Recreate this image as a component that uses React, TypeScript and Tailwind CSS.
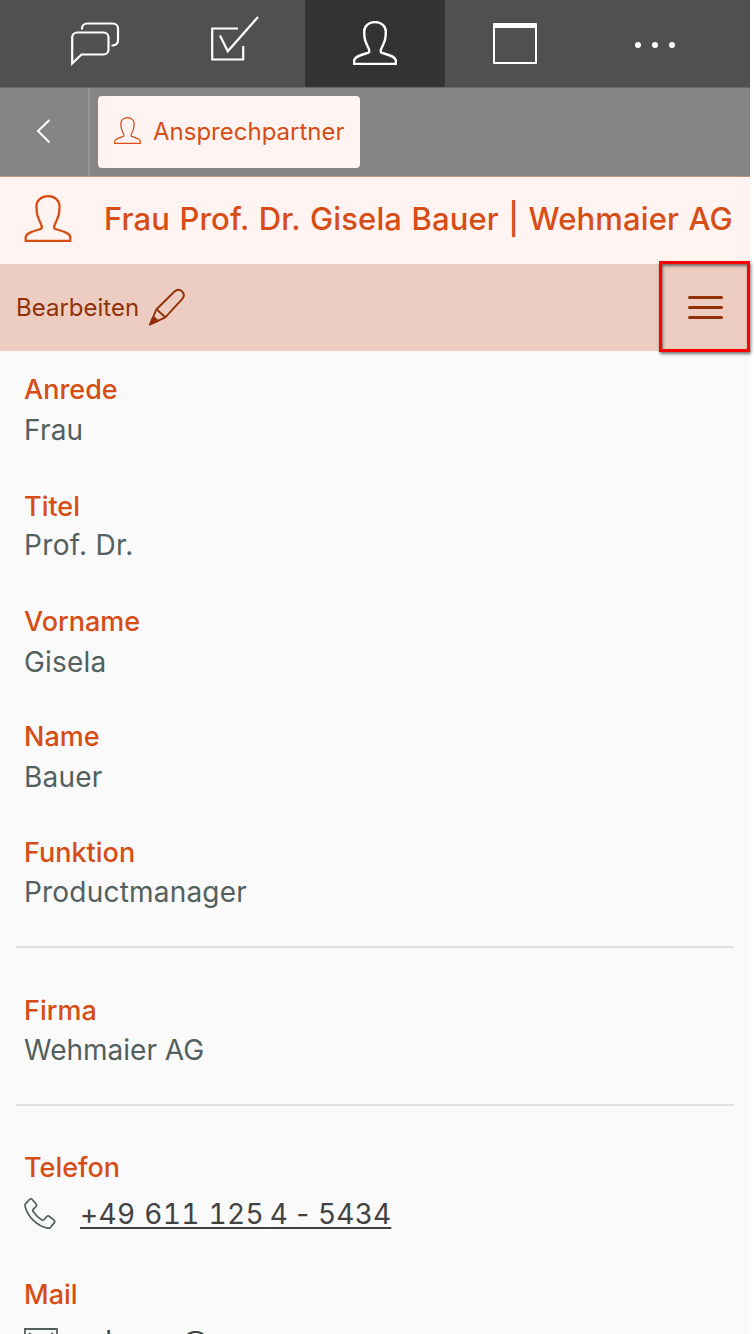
import React from "react";

function PersonIcon({ className, stroke }: { className: string; stroke: number }) {
  return (
    <svg viewBox="0 0 48 48" className={className} fill="none" stroke="currentColor" strokeWidth={stroke}>
      <path d="M24 1.2c-7 0-11.8 4.5-11.8 10.2 0 2 .4 3.200.2 4.800.2 5.800 2.200 8.600 4 12.300 1.600 3 1.500 5 .8 6C11.500 36.500 1.200 38.200 1.200 43.300v3.500h45.600v-3.500c0-5.100-10.300-6.800-16-8.800-.7-1-.8-3 .8-6 1.800-3.700 3.800-6.500 4-12.300-.2-1.600.2-2.800.2-4.800C35.800 5.700 31 1.200 24 1.200Z" />
    </svg>
  );
}

function ChatIcon() {
  return (
    <svg viewBox="0 0 50 46" className="h-[46px] w-[50px]" fill="none" stroke="currentColor" strokeWidth="2.200">
      <path d="M2.200 41.500V15.500a5 5 0 0 1 5-5h26.300a5 5 0 0 1 5 5V27.500a5 5 0 0 1-5 5H11.500L2.200 41.500Z" />
      <path d="M12 7.500V6.500a5 5 0 0 1 5-5h26a5 5 0 0 1 5 5v12a5 5 0 0 1-5 5h-1.500" />
    </svg>
  );
}

function CheckIcon() {
  return (
    <svg viewBox="0 0 50 46" className="h-[46px] w-[50px]" fill="none" stroke="currentColor" strokeWidth="2.200">
      <path d="M28 12.500H2.200v31h31V30" />
      <path d="M10 19.500l7.800 15.800L48 1" />
    </svg>
  );
}

function PencilIcon() {
  return (
    <svg viewBox="0 0 38 38" className="h-[38px] w-[38px]" fill="none" stroke="currentColor" strokeWidth="1.900" strokeLinejoin="round">
      <path d="M2 36.500l6.500-15.300L26.500 3.500c2.500-2.300 5.500-2.100 7.600 0s2.300 5.100 0 7.600L17.300 29.300 2 36.500Z" />
      <path d="M8.500 21.200l8.800 8.100" />
      <path d="M2 36.500l3.500-7.500 4.500 4Z" fill="currentColor" />
    </svg>
  );
}

function PhoneIcon() {
  return (
    <svg viewBox="0 0 34 34" className="h-[33px] w-[32px]" fill="none" stroke="currentColor" strokeWidth="1.800" strokeLinejoin="round">
      <path d="M1.800 6.500L6 1.900c.9-.8 2-.7 2.700.2l4.200 4.800c.7.9.6 1.700 0 2.600L9.800 12.600c-.7 1-.5 1.700.1 2.600 2 3 5.500 6.600 9.200 8.600.9.400 1.700.3 2.400-.4l2.700-3.200c.8-.8 1.600-.9 2.500-.3l5.200 4.200c.9.800 1 1.700.3 2.600l-4 5c-.9 1-2 1.100-3.300.8C14 30.500 4 20.500 1.200 9.500c-.3-1.200-.1-2.200.6-3Z" />
    </svg>
  );
}

const fields = [
  { label: "Anrede", value: "Frau", box: "h-[117px]", valueBox: "mt-0" },
  { label: "Titel", value: "Prof. Dr.", box: "h-[115px]", valueBox: "-mt-0.5 tracking-[0.35px]" },
  { label: "Vorname", value: "Gisela", box: "h-[115px]", valueBox: "mt-0" },
  { label: "Name", value: "Bauer", box: "h-[116px]", valueBox: "mt-0" },
  { label: "Funktion", value: "Productmanager", box: "h-[94px]", valueBox: "-mt-px" },
];

function Label({ children }: { children: React.ReactNode }) {
  return <div className="text-[27px] font-medium leading-[40px] text-[#d64d15]">{children}</div>;
}

function Value({ children }: { children: React.ReactNode }) {
  return <div className="text-[28px] leading-[40px] text-[#53605d]">{children}</div>;
}

export default function App() {
  return (
    <div className="h-[1334px] w-full overflow-hidden bg-white font-['Inter',sans-serif]">
      <div className="flex h-full w-[750px] flex-col bg-[#fafafa]">
        <nav className="flex h-[88px] shrink-0 border-b border-[#686868] bg-[#505050] text-white">
          <div className="flex w-[165px] pl-[70px] pt-[22px]"><ChatIcon /></div>
          <div className="flex w-[140px] pl-[45px] pt-4"><CheckIcon /></div>
          <div className="flex w-[140px] justify-center rounded-b-xs bg-[#333333] pt-[21px]">
            <PersonIcon className="h-[44px] w-[44px]" stroke={2.6} />
          </div>
          <div className="flex w-[140px] justify-center pt-[23px]">
            <div className="h-[41px] w-[44px] rounded-[1px] border-2 border-t-[5px] border-white" />
          </div>
          <div className="flex flex-1 items-start gap-[11px] pl-[50px] pt-[42px]">
            <span className="size-1.5 rounded-full bg-white" />
            <span className="size-1.5 rounded-full bg-white" />
            <span className="size-1.5 rounded-full bg-white" />
          </div>
        </nav>

        <div className="flex h-[89px] shrink-0 border-b border-[#c5917e] bg-[#858585]">
          <div className="flex w-[90px] border-r-2 border-[#949494] pl-[36px] pt-[30px] text-white">
            <svg viewBox="0 0 16 26" className="h-[26px] w-[16px]" fill="none" stroke="currentColor" strokeWidth="2">
              <path d="M13.500 2L2 13l11.500 11.500" />
            </svg>
          </div>
          <div className="ml-2 mt-2 flex h-[72px] w-[262px] items-center rounded bg-[#fff4f1] pl-4 text-[#d64d15]">
            <PersonIcon className="-mt-[3px] h-[27px] w-[27px] shrink-0" stroke={2.2} />
            <span className="ml-[12px] whitespace-nowrap text-[24px]">Ansprechpartner</span>
          </div>
        </div>

        <header className="flex h-[87px] shrink-0 items-center bg-[#fff4f1] pb-[4px] pl-6 text-[#d64d15]">
          <PersonIcon className="h-[47px] w-[48px] shrink-0" stroke={2.3} />
          <h1 className="ml-[32px] whitespace-nowrap text-[31px] font-medium leading-[40px] tracking-[0.15px] [word-spacing:0.9px]">Frau Prof. Dr. Gisela Bauer | Wehmaier AG</h1>
        </header>

        <div className="flex h-[87px] shrink-0 items-start justify-between bg-[#edcdc1] text-[#913009]">
          <button className="flex items-start pl-4 pt-[24px]">
            <span className="text-[24px] leading-[40px]">Bearbeiten</span>
            <span className="ml-[9px]"><PencilIcon /></span>
          </button>
          <button className="-mt-[3px] flex h-[91px] w-[91px] shrink-0 flex-col items-center justify-center gap-[7px] border-[3px] border-[#ff0000] pl-[2px] pt-px shadow-[1px_2px_3px_rgba(0,0,0,0.55),inset_1px_2px_3px_rgba(0,0,0,0.5)]">
            <span className="h-[3px] w-[35px] rounded-full bg-[#913009]" />
            <span className="h-[3px] w-[35px] rounded-full bg-[#913009]" />
            <span className="h-[3px] w-[35px] rounded-full bg-[#913009]" />
          </button>
        </div>

        <main className="px-4 pt-[19px]">
          <section className="h-[578px] border-b-2 border-[#e0e0e0] pl-2 tracking-[0.2px]">
            {fields.map((f) => (
              <div key={f.label} className={f.box}>
                <div className="tracking-normal"><Label>{f.label}</Label></div>
                <div className={f.valueBox}><Value>{f.value}</Value></div>
              </div>
            ))}
          </section>
          <section className="h-[158px] border-b-2 border-[#e0e0e0] pl-2 pt-[43px]">
            <Label>Firma</Label>
            <div className="-mt-px"><Value>Wehmaier AG</Value></div>
          </section>
          <section className="pl-2 pt-[42px]">
            <Label>Telefon</Label>
            <div className="mt-[6px] flex h-[40px] text-[#53605d]">
              <div className="pt-[3px]"><PhoneIcon /></div>
              <a className="ml-[24px] whitespace-nowrap text-[28px] leading-[40px] tracking-[0.4px] text-[#424242] underline decoration-2 underline-offset-[3px] tabular-nums [word-spacing:0.6px]">
                +49 611 125<span className="tracking-[0.2px] [word-spacing:-2px]"> 4 - 5434</span>
              </a>
            </div>
            <div className="mt-[41px]"><Label>Mail</Label></div>
            <div className="mt-[6px] flex h-[40px] text-[#53605d]">
              <svg viewBox="0 0 34 26" className="mt-[7px] h-[26px] w-[34px]" fill="none" stroke="currentColor" strokeWidth="1.800">
                <path d="M1 1h32v24H1ZM5 5l12 10L29 5" />
              </svg>
              <a className="ml-[22px] text-[28px] leading-[40px] text-[#424242] underline">g.bauer@</a>
            </div>
          </section>
        </main>
      </div>
    </div>
  );
}
